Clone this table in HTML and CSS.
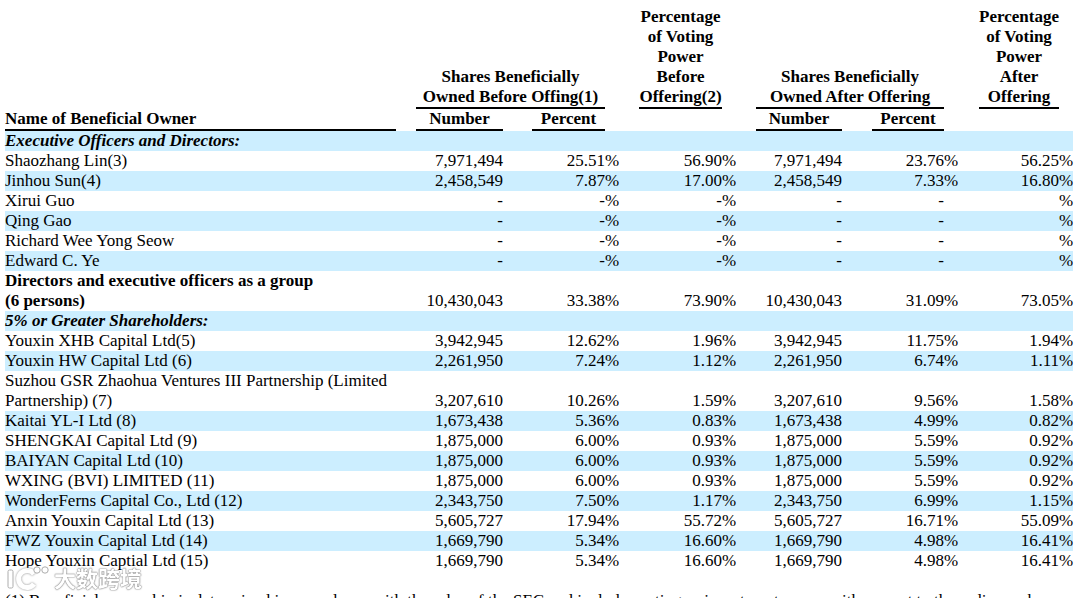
FILE: index.html
```html
<!DOCTYPE html>
<html lang="en">
<head>
<meta charset="utf-8">
<title>Beneficial Ownership</title>
<link rel="stylesheet" href="styles.css">
</head>
<body>
<div class="page">
<table class="own">
<colgroup>
<col class="w-name"><col class="w-g20"><col class="w-num1"><col class="w-g29"><col class="w-pct1"><col class="w-sg15"><col class="w-g19"><col class="w-vote1"><col class="w-sg14"><col class="w-g20"><col class="w-num2"><col class="w-g30"><col class="w-pct2"><col class="w-sg14"><col class="w-g21"><col class="w-vote2"><col class="w-sg14">
</colgroup>
<thead>
<tr class="ha">
<th rowspan="2" class="name-h ul">Name of Beneficial Owner</th>
<td></td>
<th colspan="3" class="ul">Shares Beneficially<br>Owned Before Offing(1)</th>
<td></td><td></td>
<th class="ul">Percentage<br>of Voting<br>Power<br>Before<br>Offering(2)</th>
<td></td><td></td>
<th colspan="3" class="ul">Shares Beneficially<br>Owned After Offering</th>
<td></td><td></td>
<th class="ul">Percentage<br>of Voting<br>Power<br>After<br>Offering</th>
<td></td>
</tr>
<tr class="hb">
<td></td>
<th class="ul">Number</th>
<td></td>
<th class="ul">Percent</th>
<td></td><td></td><td></td><td></td><td></td>
<th class="ul">Number</th>
<td></td>
<th class="ul">Percent</th>
<td></td><td></td><td></td><td></td>
</tr>
</thead>
<tbody>
<tr class="alt sec"><td colspan="17">Executive Officers and Directors:</td></tr>
<tr><td>Shaozhang Lin(3)</td><td></td><td class="n">7,971,494</td><td></td><td class="n">25.51</td><td>%</td><td></td><td class="n">56.90</td><td>%</td><td></td><td class="n">7,971,494</td><td></td><td class="n">23.76</td><td>%</td><td></td><td class="n">56.25</td><td>%</td></tr>
<tr class="alt"><td>Jinhou Sun(4)</td><td></td><td class="n">2,458,549</td><td></td><td class="n">7.87</td><td>%</td><td></td><td class="n">17.00</td><td>%</td><td></td><td class="n">2,458,549</td><td></td><td class="n">7.33</td><td>%</td><td></td><td class="n">16.80</td><td>%</td></tr>
<tr><td>Xirui Guo</td><td></td><td class="n">-</td><td></td><td class="n">-</td><td>%</td><td></td><td class="n">-</td><td>%</td><td></td><td class="n">-</td><td></td><td class="n">-</td><td></td><td></td><td class="n"></td><td>%</td></tr>
<tr class="alt"><td>Qing Gao</td><td></td><td class="n">-</td><td></td><td class="n">-</td><td>%</td><td></td><td class="n">-</td><td>%</td><td></td><td class="n">-</td><td></td><td class="n">-</td><td></td><td></td><td class="n"></td><td>%</td></tr>
<tr><td>Richard Wee Yong Seow</td><td></td><td class="n">-</td><td></td><td class="n">-</td><td>%</td><td></td><td class="n">-</td><td>%</td><td></td><td class="n">-</td><td></td><td class="n">-</td><td></td><td></td><td class="n"></td><td>%</td></tr>
<tr class="alt"><td>Edward C. Ye</td><td></td><td class="n">-</td><td></td><td class="n">-</td><td>%</td><td></td><td class="n">-</td><td>%</td><td></td><td class="n">-</td><td></td><td class="n">-</td><td></td><td></td><td class="n"></td><td>%</td></tr>
<tr class="grp"><td class="bold">Directors and executive officers as a group<br>(6 persons)</td><td></td><td class="n">10,430,043</td><td></td><td class="n">33.38</td><td>%</td><td></td><td class="n">73.90</td><td>%</td><td></td><td class="n">10,430,043</td><td></td><td class="n">31.09</td><td>%</td><td></td><td class="n">73.05</td><td>%</td></tr>
<tr class="alt sec"><td colspan="17">5% or Greater Shareholders:</td></tr>
<tr><td>Youxin XHB Capital Ltd(5)</td><td></td><td class="n">3,942,945</td><td></td><td class="n">12.62</td><td>%</td><td></td><td class="n">1.96</td><td>%</td><td></td><td class="n">3,942,945</td><td></td><td class="n">11.75</td><td>%</td><td></td><td class="n">1.94</td><td>%</td></tr>
<tr class="alt"><td>Youxin HW Capital Ltd (6)</td><td></td><td class="n">2,261,950</td><td></td><td class="n">7.24</td><td>%</td><td></td><td class="n">1.12</td><td>%</td><td></td><td class="n">2,261,950</td><td></td><td class="n">6.74</td><td>%</td><td></td><td class="n">1.11</td><td>%</td></tr>
<tr><td>Suzhou GSR Zhaohua Ventures III Partnership (Limited<br>Partnership) (7)</td><td></td><td class="n">3,207,610</td><td></td><td class="n">10.26</td><td>%</td><td></td><td class="n">1.59</td><td>%</td><td></td><td class="n">3,207,610</td><td></td><td class="n">9.56</td><td>%</td><td></td><td class="n">1.58</td><td>%</td></tr>
<tr class="alt"><td>Kaitai YL-I Ltd (8)</td><td></td><td class="n">1,673,438</td><td></td><td class="n">5.36</td><td>%</td><td></td><td class="n">0.83</td><td>%</td><td></td><td class="n">1,673,438</td><td></td><td class="n">4.99</td><td>%</td><td></td><td class="n">0.82</td><td>%</td></tr>
<tr><td>SHENGKAI Capital Ltd (9)</td><td></td><td class="n">1,875,000</td><td></td><td class="n">6.00</td><td>%</td><td></td><td class="n">0.93</td><td>%</td><td></td><td class="n">1,875,000</td><td></td><td class="n">5.59</td><td>%</td><td></td><td class="n">0.92</td><td>%</td></tr>
<tr class="alt"><td>BAIYAN Capital Ltd (10)</td><td></td><td class="n">1,875,000</td><td></td><td class="n">6.00</td><td>%</td><td></td><td class="n">0.93</td><td>%</td><td></td><td class="n">1,875,000</td><td></td><td class="n">5.59</td><td>%</td><td></td><td class="n">0.92</td><td>%</td></tr>
<tr><td>WXING (BVI) LIMITED (11)</td><td></td><td class="n">1,875,000</td><td></td><td class="n">6.00</td><td>%</td><td></td><td class="n">0.93</td><td>%</td><td></td><td class="n">1,875,000</td><td></td><td class="n">5.59</td><td>%</td><td></td><td class="n">0.92</td><td>%</td></tr>
<tr class="alt"><td>WonderFerns Capital Co., Ltd (12)</td><td></td><td class="n">2,343,750</td><td></td><td class="n">7.50</td><td>%</td><td></td><td class="n">1.17</td><td>%</td><td></td><td class="n">2,343,750</td><td></td><td class="n">6.99</td><td>%</td><td></td><td class="n">1.15</td><td>%</td></tr>
<tr><td>Anxin Youxin Capital Ltd (13)</td><td></td><td class="n">5,605,727</td><td></td><td class="n">17.94</td><td>%</td><td></td><td class="n">55.72</td><td>%</td><td></td><td class="n">5,605,727</td><td></td><td class="n">16.71</td><td>%</td><td></td><td class="n">55.09</td><td>%</td></tr>
<tr class="alt"><td>FWZ Youxin Capital Ltd (14)</td><td></td><td class="n">1,669,790</td><td></td><td class="n">5.34</td><td>%</td><td></td><td class="n">16.60</td><td>%</td><td></td><td class="n">1,669,790</td><td></td><td class="n">4.98</td><td>%</td><td></td><td class="n">16.41</td><td>%</td></tr>
<tr><td>Hope Youxin Captial Ltd (15)</td><td></td><td class="n">1,669,790</td><td></td><td class="n">5.34</td><td>%</td><td></td><td class="n">16.60</td><td>%</td><td></td><td class="n">1,669,790</td><td></td><td class="n">4.98</td><td>%</td><td></td><td class="n">16.41</td><td>%</td></tr>
</tbody>
</table>
<p class="note">(1) Beneficial ownership is determined in accordance with the rules of the SEC and includes voting or investment power with respect to the ordinary shares.</p>
<div class="wm">
<svg class="wm-logo" width="44" height="28" viewBox="0 0 44 28">
<rect x="2" y="7" width="5" height="18" rx="1.5"></rect>
<path d="M28 11 A8.5 8.5 0 1 0 28 21" fill="none" stroke-width="5"></path>
<circle cx="31" cy="7" r="3.2"></circle>
<circle cx="39" cy="7" r="3.2"></circle>
</svg>
<span class="wm-text">大数跨境</span>
</div>
</div>
</body>
</html>
```

FILE: styles.css
```css
html, body {
  margin: 0;
  padding: 0;
  background: #fff;
}

.page {
  position: relative;
  padding: 7px 7px 0 5px;
  font-family: "Liberation Serif", "Times New Roman", serif;
  color: #000;
}

.own {
  border-collapse: separate;
  border-spacing: 0;
  table-layout: fixed;
  width: 1068px;
  font-size: 17px;
  line-height: 20px;
}

.w-name { width: 391px; }
.w-g20 { width: 20px; }
.w-num1 { width: 87px; }
.w-g29 { width: 29px; }
.w-pct1 { width: 73px; }
.w-sg15 { width: 15px; }
.w-g19 { width: 19px; }
.w-vote1 { width: 83px; }
.w-sg14 { width: 14px; }
.w-num2 { width: 86px; }
.w-g30 { width: 30px; }
.w-pct2 { width: 72px; }
.w-g21 { width: 21px; }
.w-vote2 { width: 80px; }

.own th,
.own td {
  padding: 0;
  vertical-align: bottom;
  white-space: nowrap;
}

.own th {
  font-weight: bold;
  text-align: center;
}

.own .name-h {
  text-align: left;
}

.own .ul {
  border-bottom: 2px solid #000;
}

.own td.n {
  text-align: right;
}

.own tr.alt td {
  background: #cceeff;
}

.own tr.sec td {
  font-weight: bold;
  font-style: italic;
}

.own td.bold {
  font-weight: bold;
}

.note {
  margin: 20px 0 0;
  font-size: 17px;
  line-height: 20px;
  white-space: nowrap;
}

.wm {
  position: absolute;
  left: 6px;
  top: 563px;
  display: flex;
  align-items: center;
  gap: 4px;
  opacity: 0.95;
}

.wm-logo rect,
.wm-logo circle {
  fill: #fff;
  stroke: #a8a8a8;
  stroke-width: 1;
}

.wm-logo path {
  stroke: #fff;
  filter: drop-shadow(0 0 1px #888);
}

.wm-text {
  font-family: "Noto Sans CJK SC", sans-serif;
  font-weight: bold;
  font-size: 22px;
  line-height: 28px;
  color: #fff;
  text-shadow: 0 0 1px #777, 0 0 1px #777, 0 0 2px #999;
}
```
